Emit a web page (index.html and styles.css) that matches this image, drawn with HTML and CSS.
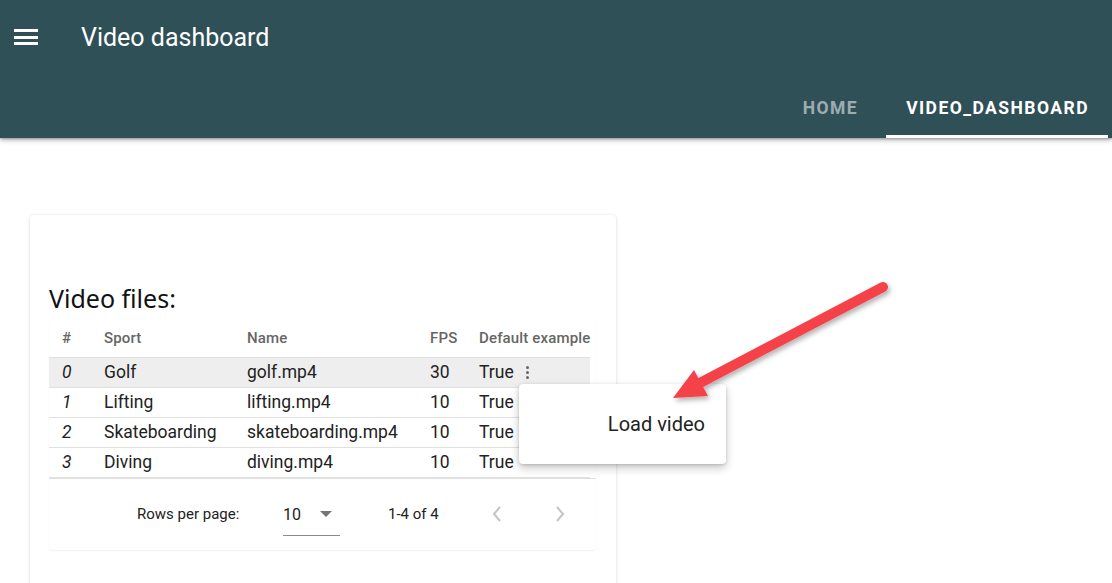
FILE: index.html
```html
<!DOCTYPE html>
<html>
<head>
<meta charset="utf-8">
<title>Video dashboard</title>
<link rel="stylesheet" href="styles.css">
</head>
<body>
<header class="appbar">
  <div class="toolbar">
    <button class="menu-btn" aria-label="menu">
      <svg width="24" height="24" viewBox="0 0 24 24"><path d="M0 4h24v3H0zM0 11h24v3H0zM0 17h24v3H0z" fill="#fff"/></svg>
    </button>
    <h1 class="title">Video dashboard</h1>
  </div>
  <nav class="tabs">
    <a class="tab">HOME</a>
    <a class="tab active">VIDEO_DASHBOARD</a>
  </nav>
</header>

<main class="main">
  <section class="card">
    <h2 class="card-title">Video files:</h2>
    <div class="table-wrap">
      <table class="table">
        <colgroup>
          <col class="c-idx"><col class="c-sport"><col class="c-name"><col class="c-fps"><col class="c-def">
        </colgroup>
        <thead>
          <tr><th class="idx">#</th><th>Sport</th><th>Name</th><th>FPS</th><th>Default example</th></tr>
        </thead>
        <tbody>
          <tr class="selected"><td class="idx">0</td><td>Golf</td><td>golf.mp4</td><td>30</td><td>True <span class="kebab"><i></i><i></i><i></i></span></td></tr>
          <tr><td class="idx">1</td><td>Lifting</td><td>lifting.mp4</td><td>10</td><td>True</td></tr>
          <tr><td class="idx">2</td><td>Skateboarding</td><td>skateboarding.mp4</td><td>10</td><td>True</td></tr>
          <tr><td class="idx">3</td><td>Diving</td><td>diving.mp4</td><td>10</td><td>True</td></tr>
        </tbody>
      </table>
      <div class="pager">
        <span class="rows-label">Rows per page:</span>
        <span class="select">10
          <svg class="caret" width="12" height="6" viewBox="0 0 12 6"><path d="M0 0h12L6 6z" fill="#757575"/></svg>
        </span>
        <span class="range">1-4 of 4</span>
        <button class="page-btn"><svg width="12" height="18" viewBox="0 0 12 18"><path d="M9 2L3 9l6 7" fill="none" stroke="#c4c4c4" stroke-width="2"/></svg></button>
        <button class="page-btn next"><svg width="12" height="18" viewBox="0 0 12 18"><path d="M3 2l6 7-6 7" fill="none" stroke="#c4c4c4" stroke-width="2"/></svg></button>
      </div>
    </div>
  </section>
</main>

<div class="popup-menu">
  <div class="menu-item">Load video</div>
</div>

<svg class="annotation" width="1112" height="583" viewBox="0 0 1112 583">
  <defs>
    <filter id="sh" x="-20%" y="-20%" width="140%" height="140%">
      <feDropShadow dx="2" dy="3" stdDeviation="2.5" flood-color="#000" flood-opacity="0.3"/>
    </filter>
  </defs>
  <g filter="url(#sh)">
    <line x1="883" y1="287" x2="698" y2="384" stroke="#f5424a" stroke-width="10" stroke-linecap="round"/>
    <polygon points="673,398 694,370 708,396" fill="#f5424a"/>
  </g>
</svg>
</body>
</html>
```

FILE: styles.css
```css
* { box-sizing: border-box; }
html, body {
  margin: 0;
  padding: 0;
  width: 1112px;
  height: 583px;
  overflow: hidden;
  background: #fff;
  font-family: Roboto, "Liberation Sans", sans-serif;
  color: #222;
}

.appbar {
  background: #305058;
  height: 138px;
  box-shadow: 0 2px 5px rgba(0,0,0,0.3), 0 1px 2px rgba(0,0,0,0.2);
  position: relative;
  z-index: 1;
}
.toolbar {
  height: 76px;
  display: flex;
  align-items: center;
  padding-left: 14px;
}
.menu-btn {
  background: none;
  border: 0;
  padding: 0;
  width: 24px;
  height: 24px;
  margin-top: -3px;
  display: flex;
}
.title {
  margin: -2px 0 0 43px;
  font-weight: 400;
  font-size: 25px;
  color: #fff;
  letter-spacing: 0;
}
.tabs {
  height: 62px;
  display: flex;
  justify-content: flex-end;
  padding-right: 4px;
}
.tab {
  display: flex;
  align-items: center;
  justify-content: center;
  padding: 4px 19px 0 20px;
  font-size: 17.5px;
  font-weight: 700;
  letter-spacing: 1.45px;
  color: rgba(255,255,255,0.55);
  border-bottom: 3px solid transparent;
  margin-left: 9px;
}
.tab.active {
  color: #fff;
  border-bottom-color: #fff;
}

.main {
  padding: 77px 0 0 30px;
}
.card {
  width: 586px;
  height: 400px;
  background: #fff;
  border-radius: 4px;
  box-shadow: 0 1px 4px rgba(0,0,0,0.12), 0 0 2px rgba(0,0,0,0.06);
  padding: 68px 20px 0 19px;
}
.card-title {
  margin: 0;
  font-family: "Noto Sans", "Open Sans", sans-serif;
  font-weight: 400;
  font-size: 25px;
  line-height: 30px;
  color: #111;
}
.table-wrap {
  margin-top: 7px;
  width: 547px;
  height: 230px;
  border-radius: 4px;
  box-shadow: 0 1px 2px rgba(0,0,0,0.06);
}
.table {
  width: 541px;
  border-collapse: collapse;
  table-layout: fixed;
}
.c-idx { width: 55px; }
.c-sport { width: 143px; }
.c-name { width: 183px; }
.c-fps { width: 49px; }
.c-def { width: 111px; }
.table th {
  text-align: left;
  font-size: 15px;
  font-weight: 500;
  letter-spacing: 0.15px;
  color: #666;
  height: 37px;
  padding: 0;
  border-bottom: 1px solid #e0e0e0;
  white-space: nowrap;
}
.table td {
  font-size: 17.5px;
  height: 30px;
  padding: 0;
  border-bottom: 1px solid #e0e0e0;
  white-space: nowrap;
  color: #222;
}
.table .idx {
  padding-left: 13px;
}
.table td.idx { font-style: italic; }
.table tr.selected td { background: #eeeeee; }
.kebab {
  display: inline-flex;
  flex-direction: column;
  gap: 2px;
  vertical-align: middle;
  margin-left: 8px;
  margin-top: -2px;
}
.kebab i {
  display: block;
  width: 3px;
  height: 3px;
  border-radius: 50%;
  background: #666;
}

.pager {
  border-top: 1px solid #e0e0e0;
  width: 547px;
  height: 72px;
  display: flex;
  align-items: center;
  padding-left: 88px;
  font-size: 15px;
  color: #222;
}
.rows-label { width: 146px; }
.select {
  width: 57px;
  height: 42px;
  display: flex;
  align-items: center;
  font-size: 16px;
  border-bottom: 1px solid #8a8a8a;
  margin-top: 1px;
}
.caret { margin-left: 19px; }
.range { margin-left: 48px; width: 89px; font-size: 15px; }
.page-btn {
  background: none;
  border: 0;
  padding: 0;
  width: 40px;
  height: 40px;
  display: flex;
  align-items: center;
  justify-content: center;
}
.page-btn.next { margin-left: 23px; }

.popup-menu {
  position: absolute;
  left: 519px;
  top: 384px;
  width: 207px;
  height: 80px;
  background: #fff;
  border-radius: 4px;
  box-shadow: 0 4px 10px rgba(0,0,0,0.22), 0 1px 3px rgba(0,0,0,0.15);
  display: flex;
  align-items: center;
  justify-content: flex-end;
  padding-right: 21px;
  z-index: 2;
}
.menu-item {
  font-size: 20px;
  color: #222;
}
.annotation {
  position: absolute;
  left: 0;
  top: 0;
  z-index: 3;
  pointer-events: none;
}
```
